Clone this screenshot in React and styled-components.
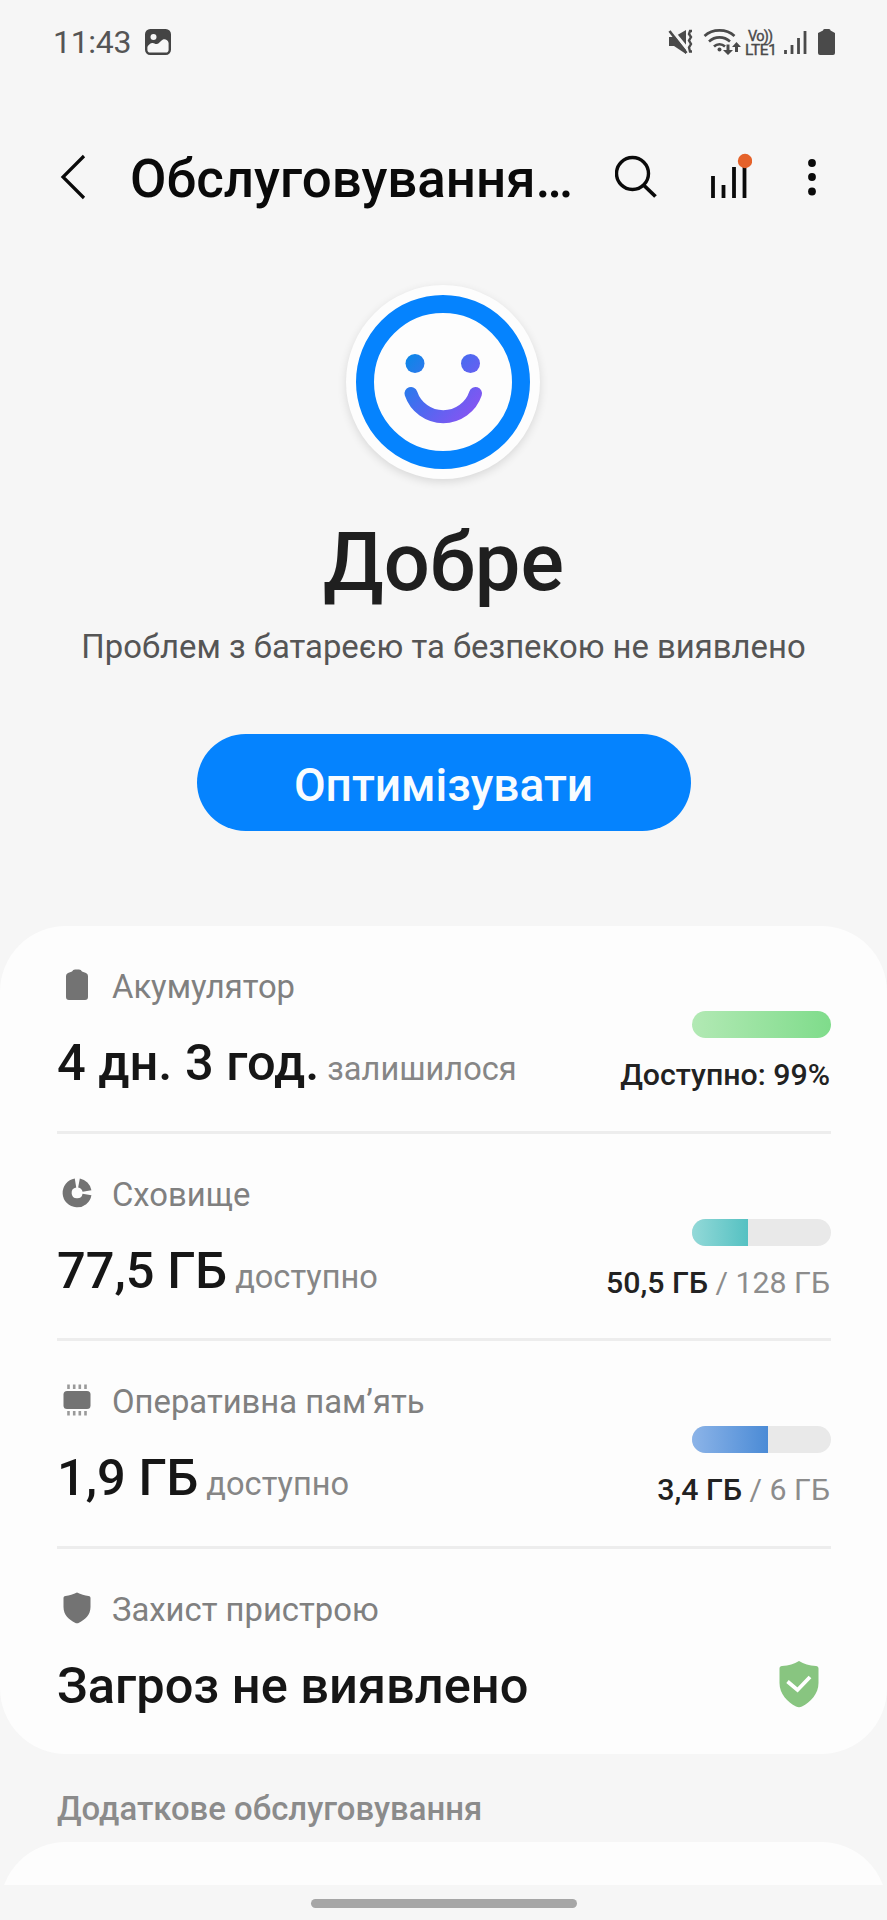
import React from "react";
import styled, { createGlobalStyle } from "styled-components";

const App = () => {
  return (
    <>
      <GlobalStyle />
      <Screen>
        <StatusBar />
        <Header />
        <Summary />
        <Card>
          {rows.map((row) => (
            <CareRow key={row.label} {...row} />
          ))}
        </Card>
        <SectionTitle>Додаткове обслуговування</SectionTitle>
        <NextCard />
        <NavBar>
          <Handle />
        </NavBar>
      </Screen>
    </>
  );
};

const StatusBar = () => (
  <Status>
    <Clock>11:43</Clock>
    <svg width="26" height="26" viewBox="0 0 26 26">
      <rect x="1.2" y="1.2" width="23.6" height="23.6" rx="4" fill="none" stroke="#444" strokeWidth="2.4" />
      <path d="M2 2h22v12c-1-3-4-4.500-6-3.500-2 .8-3.500 4-6 4.500-2 .4-3-1.500-5-1-2.500.6-3 2-5 4z" fill="#444" />
      <circle cx="8.500" cy="8" r="3" fill="#f6f6f6" />
    </svg>
    <StatusIcons>
      <svg width="170" height="36" viewBox="0 -3 170 36">
        <g fill="none" stroke="#4a4a4a">
          {/* muted speaker with vibration */}
          <path d="M2 10h5l12-7v24L7 19H2z" fill="#4a4a4a" stroke="none" />
          <path d="M4 2l18 22" stroke="#f6f6f6" strokeWidth="3.500" />
          <path d="M2.500 4l17 22" strokeWidth="2.600" />
          <path d="M25 4h-2l-1 3 2 3-2 3.500 2 3.500-2 3.500 1 4h2" strokeWidth="2.400" />
          <path d="M37.500 9c8-7.500 22-7.500 30 0M42 14.500c6-5.500 15-5.500 21 0M47 19.500c3-3 8-3 11 0" strokeWidth="2.600" />
          <path d="M118.500 23v4M125 18v9M131.500 11v16M138 4v23" strokeWidth="2.800" />
        </g>
        <circle cx="52.500" cy="22.500" r="2" fill="#4a4a4a" />
        <path d="M59.500 17.500h3V23h3.500l-5 5-5-5h3.500zM71 25h-3v-5h-3l4.500-5 4.500 5h-3z" fill="#4a4a4a" />
        <g fill="#4a4a4a" stroke="#4a4a4a" strokeWidth="0.4" fontFamily="Roboto, sans-serif">
          <text x="81" y="13.500" fontSize="14.500" textLength="25">
            Vo))
          </text>
          <text x="78" y="28" fontSize="15.500" textLength="32">
            LTE1
          </text>
        </g>
        <path d="M156 3.500q0-1.500 1.500-1.500h4.500q1.500 0 1.500 1.500L168 6v20q0 2-2 2h-13q-2 0-2-2V6z" fill="#4a4a4a" />
      </svg>
    </StatusIcons>
  </Status>
);

const Header = () => (
  <Toolbar>
    <svg width="26" height="46" viewBox="0 0 26 46">
      <path d="M24 2L3 23l21 21" fill="none" stroke="#0a0a0a" strokeWidth="3.2" />
    </svg>
    <Title>Обслуговування…</Title>
    <Actions>
      <svg width="44" height="50" viewBox="0 0 44 50">
        <circle cx="17.500" cy="21.500" r="16" fill="none" stroke="#0a0a0a" strokeWidth="3.400" />
        <path d="M28.500 33L40.500 44.500" stroke="#0a0a0a" strokeWidth="3.800" />
      </svg>
      <svg width="44" height="50" viewBox="0 0 44 50">
        <path d="M5 24v22M15.500 33v13M26 15v31M36.500 13v33" stroke="#0a0a0a" strokeWidth="3.800" />
        <circle cx="37" cy="9" r="7.200" fill="#e5622a" />
      </svg>
      <Dots width="12" height="50" viewBox="0 0 12 50">
        <circle cx="6" cy="11" r="3.900" />
        <circle cx="6" cy="25" r="3.900" />
        <circle cx="6" cy="39.500" r="3.900" />
      </Dots>
    </Actions>
  </Toolbar>
);

const Summary = () => (
  <Hero>
    <Face>
      <svg width="194" height="194" viewBox="0 0 194 194">
        <defs>
          <linearGradient id="face" gradientUnits="userSpaceOnUse" x1="66" y1="68" x2="130" y2="124">
            <stop offset="0" stopColor="#0e86e8" />
            <stop offset="0.5" stopColor="#4c6af0" />
            <stop offset="1" stopColor="#8455f2" />
          </linearGradient>
        </defs>
        <circle cx="97" cy="97" r="78" fill="none" stroke="#0583fe" strokeWidth="18" />
        <circle cx="69" cy="78.500" r="9.500" fill="url(#face)" />
        <circle cx="124.500" cy="78.500" r="9.500" fill="url(#face)" />
        <path
          d="M65 108.500a34 34 0 0 0 64.500 0"
          fill="none"
          stroke="url(#face)"
          strokeWidth="13"
          strokeLinecap="round"
        />
      </svg>
    </Face>
    <Grade>Добре</Grade>
    <Note>Проблем з батареєю та безпекою не виявлено</Note>
    <OptimizeButton>Оптимізувати</OptimizeButton>
  </Hero>
);

const CareRow = ({ icon, label, value, suffix, meter, used, total, secure }) => (
  <Row>
    <Info>
      <Label>
        <IconSlot>{icon}</IconSlot>
        {label}
      </Label>
      <Value>
        {value}
        {suffix && <Suffix>{suffix}</Suffix>}
      </Value>
    </Info>
    {meter && (
      <Usage>
        <Track>
          <Fill $from={meter.from} $to={meter.to} style={{ width: `${meter.percent}%` }} />
        </Track>
        <Amount>
          <Used>{used}</Used>
          {total && ` / ${total}`}
        </Amount>
      </Usage>
    )}
    {secure && (
      <SecureBadge width="40" height="48" viewBox="0 0 40 48">
        <path
          d="M20 1c5 3 10 4.500 17 5 1.500 0 2.500 1 2.500 2.500V23c0 11-8 19-16.500 23.500-2 1-4 1-6 0C8.500 42 .5 34 .5 23V8.500C.5 7 1.500 6 3 6 10 5.500 15 4 20 1z"
          fill="#88c580"
        />
        <path d="M8.500 21.500l10 8.500L31 17" fill="none" stroke="#fff" strokeWidth="3.800" />
      </SecureBadge>
    )}
  </Row>
);

const BatteryIcon = () => (
  <svg width="30" height="32" viewBox="0 0 30 32">
    <path
      d="M10 2.500Q11 .5 13 .5h4q2 0 3 2l4 1.500q2 .8 2 3v21q0 3-3 3H7q-3 0-3-3V7q0-2.200 2-3z"
      fill="#737373"
    />
  </svg>
);

const StorageIcon = () => (
  <svg width="30" height="32" viewBox="0 0 30 32">
    <path d="M13.500 6A10 10 0 1 0 25 17.500" fill="none" stroke="#737373" strokeWidth="9" />
    <path d="M17 6A10 10 0 0 1 25 14" fill="none" stroke="#737373" strokeWidth="9" />
  </svg>
);

const MemoryIcon = () => (
  <svg width="30" height="32" viewBox="0 0 30 32">
    <rect x="1.500" y="7" width="27" height="18" rx="3.500" fill="#737373" />
    <path
      d="M6.500 .5v4.500M12.200 .5v4.500M17.800 .5v4.500M23.500 .5v4.500M6.500 27v4.500M12.200 27v4.500M17.800 27v4.500M23.500 27v4.500"
      stroke="#9a9a9a"
      strokeWidth="2.600"
    />
  </svg>
);

const ShieldIcon = () => (
  <svg width="30" height="32" viewBox="0 0 30 32">
    <path
      d="M15 .5c4 2 7.500 3 11.500 3.500 1.200 0 2 .8 2 2V15c0 8-5.500 12.500-11.500 15.800-1.300.7-2.700.7-4 0C7 27.500 1.500 23 1.500 15V6c0-1.200.8-2 2-2C7.500 3.500 11 2.500 15 .5z"
      fill="#737373"
    />
  </svg>
);

const rows = [
  {
    icon: <BatteryIcon />,
    label: "Акумулятор",
    value: "4 дн. 3 год.",
    suffix: "залишилося",
    meter: { percent: 100, from: "#b2e9b4", to: "#7fdc8b" },
    used: "Доступно: 99%",
  },
  {
    icon: <StorageIcon />,
    label: "Сховище",
    value: "77,5 ГБ",
    suffix: "доступно",
    meter: { percent: 40, from: "#93d9d8", to: "#55c1c2" },
    used: "50,5 ГБ",
    total: "128 ГБ",
  },
  {
    icon: <MemoryIcon />,
    label: "Оперативна пам’ять",
    value: "1,9 ГБ",
    suffix: "доступно",
    meter: { percent: 55, from: "#8cb4e8", to: "#4b8bd6" },
    used: "3,4 ГБ",
    total: "6 ГБ",
  },
  {
    icon: <ShieldIcon />,
    label: "Захист пристрою",
    value: "Загроз не виявлено",
    secure: true,
  },
];

const GlobalStyle = createGlobalStyle`
  * {
    box-sizing: border-box;
  }

  body {
    margin: 0;
    background-color: #f6f6f6;
    font-family: Roboto, sans-serif;
  }
`;

const Screen = styled.div`
  width: 887px;
  height: 1920px;
  overflow: hidden;
  display: flex;
  flex-direction: column;
  background-color: #f6f6f6;
`;

const Status = styled.div`
  height: 84px;
  flex-shrink: 0;
  display: flex;
  align-items: center;
  padding: 0 50px 0 53px;
`;

const Clock = styled.span`
  width: 92px;
  font-size: 32px;
  letter-spacing: -0.3px;
  color: #555;
`;

const StatusIcons = styled.div`
  margin-left: auto;
  display: flex;
`;

const Toolbar = styled.header`
  height: 186px;
  flex-shrink: 0;
  display: flex;
  align-items: center;
  padding: 0 69px 0 60px;
`;

const Title = styled.h1`
  margin: 0 0 0 44px;
  padding-top: 4px;
  font-size: 52.9px;
  font-weight: 500;
  line-height: 60px;
  white-space: nowrap;
  color: #0a0a0a;
`;

const Actions = styled.div`
  margin-left: auto;
  display: flex;
  align-items: center;
  gap: 49px;
`;

const Dots = styled.svg`
  margin-left: 5px;
  fill: #0a0a0a;
`;

const Hero = styled.section`
  height: 656px;
  flex-shrink: 0;
  display: flex;
  flex-direction: column;
  align-items: center;
  padding-top: 15px;
`;

const Face = styled.div`
  width: 194px;
  height: 194px;
  margin-right: 2px;
  border-radius: 50%;
  background-color: #fdfdfd;
  box-shadow: 0 3px 10px rgba(0, 0, 0, 0.12);
`;

const Grade = styled.h2`
  margin: 37px 0 0;
  font-size: 81.2px;
  font-weight: 500;
  line-height: 94px;
  color: #1f1f1f;
`;

const Note = styled.p`
  margin: 17px 0 0;
  font-size: 32.85px;
  line-height: 40px;
  white-space: nowrap;
  color: #555;
`;

const OptimizeButton = styled.button`
  width: 494px;
  height: 97px;
  margin-top: 67px;
  padding-top: 5px;
  border: none;
  border-radius: 49px;
  background-color: #0583fe;
  color: #f8fcff;
  font-family: inherit;
  font-size: 46px;
  font-weight: 500;
`;

const Card = styled.section`
  height: 828px;
  flex-shrink: 0;
  padding: 0 56px 0 57px;
  border-radius: 66px;
  background-color: #fdfdfd;
`;

const Row = styled.div`
  height: 207.7px;
  display: flex;
  justify-content: space-between;
  border-bottom: 3px solid #ededed;

  &:last-child {
    height: 205px;
    border-bottom: none;
  }
`;

const Info = styled.div`
  display: flex;
  flex-direction: column;
`;

const Label = styled.div`
  display: flex;
  align-items: center;
  gap: 20px;
  margin-top: 41px;
  font-size: 32.8px;
  line-height: 40px;
  color: #808080;
`;

const IconSlot = styled.span`
  display: flex;
  padding: 0 0 4px 5px;
`;

const Value = styled.div`
  margin-top: 26px;
  font-size: 50.6px;
  font-weight: 500;
  line-height: 60px;
  white-space: nowrap;
  color: #161616;
`;

const Suffix = styled.span`
  margin-left: 8px;
  font-size: 32.6px;
  font-weight: 400;
  color: #868686;
`;

const Usage = styled.div`
  display: flex;
  flex-direction: column;
  align-items: flex-end;
  padding-top: 85px;
`;

const Track = styled.div`
  width: 139px;
  height: 27px;
  overflow: hidden;
  border-radius: 14px;
  background-color: #e9e9e9;
`;

const Fill = styled.div`
  height: 100%;
  background: linear-gradient(to right, ${(props) => props.$from}, ${(props) => props.$to});
`;

const Amount = styled.div`
  margin-top: 20px;
  padding-right: 1px;
  font-size: 30.3px;
  line-height: 34px;
  white-space: nowrap;
  color: #8c8c8c;
`;

const Used = styled.span`
  font-weight: 500;
  color: #222;
`;

const SecureBadge = styled.svg`
  margin: 111px 12px 0 0;
`;

const SectionTitle = styled.h3`
  height: 88px;
  flex-shrink: 0;
  margin: 0;
  padding: 35px 57px 0;
  font-size: 32.9px;
  font-weight: 500;
  line-height: 40px;
  color: #8b8b8b;
`;

const NextCard = styled.section`
  height: 43px;
  flex-shrink: 0;
  overflow: hidden;

  &::before {
    content: "";
    display: block;
    height: 140px;
    border-radius: 66px;
    background-color: #fdfdfd;
  }
`;

const NavBar = styled.footer`
  flex: 1;
  display: flex;
  justify-content: center;
  padding-top: 14px;
`;

const Handle = styled.div`
  width: 266px;
  height: 9px;
  border-radius: 5px;
  background-color: #a6a6a6;
`;

export default App;
